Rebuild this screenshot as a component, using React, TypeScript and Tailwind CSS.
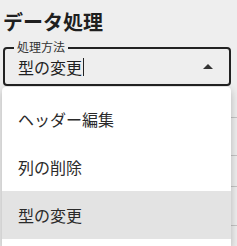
import React from 'react'

const font = { fontFamily: '"Noto Sans CJK JP", "Noto Sans", sans-serif' }

export default function App() {
    const options = ['ヘッダー編集', '列の削除', '型の変更']
    const selected = '型の変更'

    return (
        <div className="relative w-[237px] h-[246px] overflow-hidden bg-[#eeeeee] text-[#1f1f1f]" style={font}>
            {/* Section title */}
            <h2 className="pl-[3px] pt-[6px] text-[20px] font-bold leading-[32px]">データ処理</h2>

            {/* Outlined select */}
            <div className="relative mt-[9px] ml-[3px] w-[228px] h-[39px] rounded-[4px] border-2 border-[#222222]">
                <span className="absolute -top-[9px] left-[9px] px-[3px] bg-[#eeeeee] text-[12px] leading-[14px] text-[#333333]">
                    処理方法
                </span>
                <div className="flex h-full items-center pl-[13px] pr-[20px] text-[16px] leading-[20px]">
                    {selected}
                    <span className="ml-[1px] w-px h-[18px] bg-[#222222]" />
                </div>
                <svg className="absolute right-[15px] top-[13px]" width="12" height="10" viewBox="0 0 12 10">
                    <path d="M1 7 L6 2 L11 7 Z" fill="#333333" />
                </svg>
            </div>

            {/* Table behind the menu */}
            <div className="mt-[4px] ml-[3px] w-[234px]">
                <div className="h-[28px] border-b border-[#c4c4c4]" />
                <div className="h-[38px] border-b border-[#c4c4c4]" />
                <div className="h-[31px] border-b border-[#c4c4c4]" />
                <div className="h-[39px] border-b border-[#c4c4c4]" />
            </div>

            {/* Open menu */}
            <ul className="absolute left-[2px] top-[87px] w-[229px] rounded-t-[4px] bg-white py-[8px] shadow-[0_3px_8px_rgba(0,0,0,0.25)]">
                {options.map(o => (
                    <li
                        key={o}
                        className={
                            'flex h-[48px] items-center px-[16px] text-[16px] text-[#2a2a2a] ' +
                            (o === selected ? 'bg-[#e3e3e3]' : '')
                        }
                    >
                        {o}
                    </li>
                ))}
            </ul>
        </div>
    )
}
